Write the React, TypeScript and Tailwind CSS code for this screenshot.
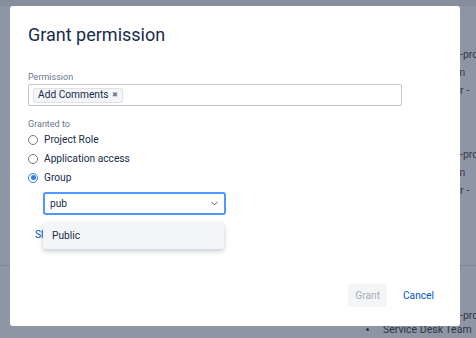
import { ChevronDown } from "lucide-react"

const font = { fontFamily: 'Roboto, "Noto Sans", sans-serif' }

function Radio({ label, checked = false }: { label: string; checked?: boolean }) {
  return (
    <label className="flex items-center gap-[6px] h-[19px] text-[10.2px] text-[#172b4d]">
      {checked ? (
        <span className="w-[10px] h-[10px] rounded-full border-[1.5px] border-[#2f7fe0] bg-white flex items-center justify-center">
          <span className="w-[5px] h-[5px] rounded-full bg-[#2f7fe0]" />
        </span>
      ) : (
        <span className="w-[10px] h-[10px] rounded-full border border-[#767676] bg-white" />
      )}
      {label}
    </label>
  )
}

function BgLine({ pre, post, w }: { pre: string; post: string; w: number }) {
  return (
    <div className="flex whitespace-nowrap h-[18px] items-center">
      <span className="text-right" style={{ width: w }}>{pre}</span>
      <span>{post}</span>
    </div>
  )
}

export default function App() {
  return (
    <div className="relative w-[476px] h-[338px] overflow-hidden bg-[#8e95a5]" style={font}>
      {/* page behind the blanket */}
      <div className="h-[6px] bg-[#868d9d]" />
      <div className="absolute left-[380px] top-[46px] flex flex-col text-[10.5px] text-[#333946]">
        <BgLine pre="Software" post="-project" w={80} />
        <BgLine pre="Tea" post="m" w={76} />
        <BgLine pre="Membe" post="r -" w={80} />
        <div className="h-[46px]" />
        <BgLine pre="Software" post="-project" w={80} />
        <BgLine pre="Tea" post="m" w={76} />
        <BgLine pre="Membe" post="r -" w={80} />
      </div>
      <div className="absolute left-0 right-0 top-[265px] h-px bg-[#7f8696]" />
      <div className="absolute left-[380px] top-[307px] text-[10.5px] text-[#333946]">
        <BgLine pre="Software" post="-project" w={80} />
      </div>
      <div className="absolute left-[366px] top-[322px] flex items-center gap-[14px] whitespace-nowrap text-[10.5px] text-[#2f3542]">
        <span className="w-[3px] h-[3px] rounded-full bg-[#2f3542]" />
        Service Desk Team
      </div>

      {/* dialog */}
      <div className="absolute left-[10px] top-[6px] w-[450px] h-[320px] bg-white rounded-[3px] flex flex-col">
        <h2 className="pl-[18px] pt-[17px] text-[18px] leading-[24px] text-[#172b4d]">Grant permission</h2>

        <div className="px-[18px] pt-[25px]">
          <div className="text-[9px] leading-[11px] text-[#6b778c]">Permission</div>
          <div className="mt-[1px] w-[374px] h-[22px] border border-[#c1c7d0] rounded-[2px] flex items-center px-[4px]">
            <span className="flex items-center gap-[3px] h-[15px] px-[4px] bg-[#f4f5f7] border border-[#dfe1e6] rounded-[2px] text-[10.2px] text-[#172b4d]">
              Add Comments
              <span className="text-[7px] text-[#6b778c]">✖</span>
            </span>
          </div>

          <div className="mt-[13px] text-[9px] leading-[11px] text-[#6b778c]">Granted to</div>
          <div className="flex flex-col">
            <Radio label="Project Role" />
            <Radio label="Application access" />
            <Radio label="Group" checked />
          </div>

          <div className="relative ml-[15px] mt-[5px]">
            <div className="w-[183px] h-[23px] border-2 border-[#4c9aff] rounded-[3px] flex items-center justify-between pl-[5px] pr-[4px] text-[10.2px] text-[#172b4d]">
              pub
              <ChevronDown className="w-[11px] h-[11px] text-[#42526e]" strokeWidth={2} />
            </div>
            <div className="mt-[12px] text-[10.2px] text-[#0052cc] -ml-[8px]">Show more</div>
            <div className="absolute left-0 top-[31px] w-[181px] h-[26px] bg-[#f4f5f7] rounded-[3px] shadow-[0_2px_5px_rgba(9,30,66,0.25)] flex items-center pl-[9px] text-[10.2px] text-[#172b4d]">
              Public
            </div>
          </div>
        </div>

        <div className="mt-auto flex items-center justify-end gap-[16px] pr-[26px] pb-[19px]">
          <span className="h-[23px] px-[7px] flex items-center bg-[#f4f5f7] rounded-[3px] text-[10.2px] text-[#a5adba]">Grant</span>
          <span className="text-[10.2px] text-[#0052cc]">Cancel</span>
        </div>
      </div>
    </div>
  )
}
